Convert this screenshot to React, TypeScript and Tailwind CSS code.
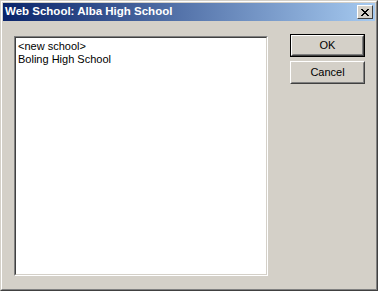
import React from "react";

export default function App() {
  return (
    <div className="w-[378px] h-[291px] bg-[#d4d0c8] border border-t-[#d4d0c8] border-l-[#d4d0c8] border-r-[#404040] border-b-[#404040]" style={{ fontFamily: '"Liberation Sans", Arial, sans-serif' }}>
      <div className="w-full h-full border border-t-white border-l-white border-r-[#808080] border-b-[#808080] p-px flex flex-col">
        <div className="h-[18px] flex items-center justify-between pl-[2px] pr-[2px] bg-[linear-gradient(to_right,#0a246a,#a6caf0)]">
          <span className="text-white font-bold text-[11.5px] leading-none">Web School: Alba High School</span>
          <div className="w-[16px] h-[14px] bg-[#d4d0c8] border border-t-white border-l-white border-r-[#404040] border-b-[#404040] flex items-center justify-center">
            <svg width="8" height="7" viewBox="0 0 8 7" shapeRendering="crispEdges">
              <path d="M0 0h2v1h-2zM6 0h2v1h-2zM1 1h2v1h-2zM5 1h2v1h-2zM2 2h4v1h-4zM3 3h2v1h-2zM2 4h4v1h-4zM1 5h2v1h-2zM5 5h2v1h-2zM0 6h2v1h-2zM6 6h2v1h-2z" fill="#000" />
            </svg>
          </div>
        </div>
        <div className="flex pt-[15px] pl-[11px]">
          <div className="w-[254px] h-[240px] border border-t-[#808080] border-l-[#808080] border-r-white border-b-white">
            <div className="w-full h-full bg-white border border-t-[#404040] border-l-[#404040] border-r-[#d4d0c8] border-b-[#d4d0c8] pl-[2px] pt-[2px] text-[11px] leading-[13px] text-black">
              <div>&lt;new school&gt;</div>
              <div>Boling High School</div>
            </div>
          </div>
          <div className="ml-[22px] -mt-[2px] flex flex-col gap-[4px]">
            <div className="w-[75px] h-[23px] border border-black">
              <div className="w-full h-full border border-t-white border-l-white border-r-[#404040] border-b-[#404040]">
                <div className="w-full h-full border border-transparent border-r-[#808080] border-b-[#808080] flex items-center justify-center text-[11px] text-black">OK</div>
              </div>
            </div>
            <div className="w-[75px] h-[23px] border border-t-white border-l-white border-r-[#404040] border-b-[#404040]">
              <div className="w-full h-full border border-transparent border-r-[#808080] border-b-[#808080] flex items-center justify-center text-[11px] text-black">Cancel</div>
            </div>
          </div>
        </div>
      </div>
    </div>
  );
}
